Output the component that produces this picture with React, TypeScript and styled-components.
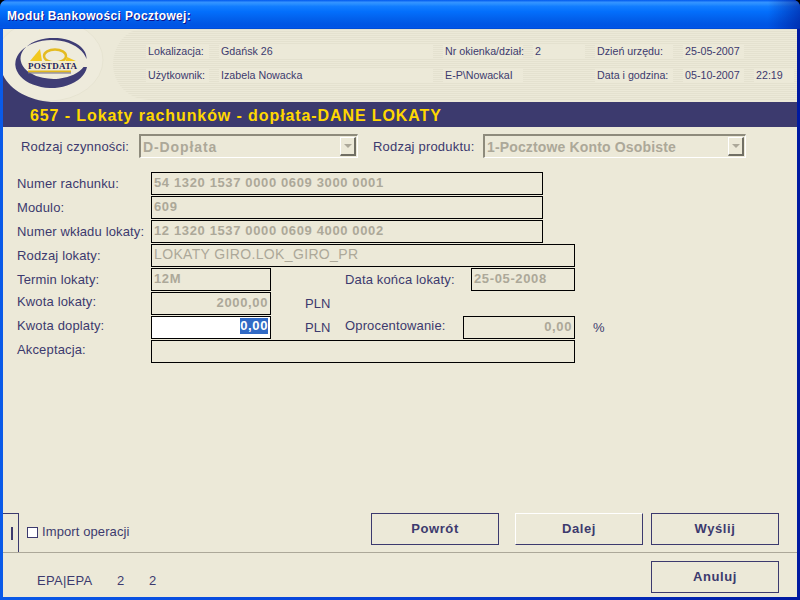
import React from "react";
import styled, { createGlobalStyle } from "styled-components";

const Global = createGlobalStyle`
  html, body { margin: 0; padding: 0; background: #000; }
  body { width: 800px; height: 600px; overflow: hidden; font-family: "Liberation Sans", Arial, sans-serif; }
`;

const Ink = "#3c3a6e";
const Paper = "#ece9d8";
const Muted = "#aca899";

const Window = styled.div`
  width: 800px;
  height: 600px;
  display: flex;
  flex-direction: column;
  border-radius: 7px 7px 0 0;
  overflow: hidden;
  background: linear-gradient(90deg, #0a5ae8 0%, #0840d8 50%, #0019a0 100%);
`;

const TitleBar = styled.div`
  height: 29px;
  flex: none;
  box-sizing: border-box;
  padding: 9px 0 0 7px;
  background:
    linear-gradient(90deg, rgba(0, 20, 140, 0) 96%, rgba(0, 20, 140, 0.55) 100%),
    linear-gradient(180deg, #0058ee 0%, #3593ff 8%, #288eff 14%, #127dff 22%, #036ffc 40%, #0262ee 62%, #0057e5 80%, #0054e3 90%, #0055eb 96%, #0046c8 100%);
  color: #fff;
  font-size: 12px;
  line-height: 14px;
  font-weight: bold;
  letter-spacing: 0.35px;
  text-shadow: 1px 1px 0 #0f1089;
`;

const Client = styled.div`
  flex: 1;
  margin: 0 3px 3px;
  background: ${Paper};
  color: ${Ink};
  display: flex;
  flex-direction: column;
`;

const Header = styled.div`
  height: 73px;
  flex: none;
  display: flex;
  background: ${Paper};
`;

const LogoSvg = styled.svg`
  width: 110px;
  height: 73px;
  flex: none;
  display: block;
`;

const InfoPanel = styled.div`
  flex: 1;
  height: 71px;
  box-sizing: border-box;
  padding: 15px 0 0 33px;
  border-radius: 30px 0 0 36px / 36px 0 0 36px;
  background: repeating-linear-gradient(180deg, #e4e1cf 0 1px, ${Paper} 1px 2px);
  display: grid;
  grid-template-columns: 63px 214px 80px 52px 78px 61px 40px;
  grid-auto-rows: 24px;
  column-gap: 10px;
  overflow: hidden;
`;

const InfoCell = styled.div`
  font-size: 10.7px;
  line-height: 14px;
  height: 14px;
  padding-left: 2px;
  background: ${Paper};
  white-space: nowrap;
`;

const Banner = styled.div`
  height: 25px;
  flex: none;
  box-sizing: border-box;
  padding: 1px 0 0 27px;
  background: ${Ink};
  color: #ffd700;
  font-size: 16px;
  font-weight: bold;
  line-height: 25px;
  letter-spacing: 0.9px;
  white-space: nowrap;
`;

const Form = styled.div`
  flex: 1;
  display: flex;
  flex-direction: column;
  padding-top: 7px;
`;

const ComboRow = styled.div`
  display: flex;
  align-items: center;
  height: 24px;
  padding-left: 18px;
  margin-bottom: 14px;
`;

const ComboLabel = styled.span<{ $w: number; $l?: number }>`
  width: ${(p) => p.$w}px;
  margin-left: ${(p) => p.$l ?? 0}px;
  font-size: 13px;
  letter-spacing: 0.2px;
  white-space: nowrap;
  flex: none;
`;

const Combo = styled.div<{ $w: number; $ls: number }>`
  width: ${(p) => p.$w}px;
  height: 24px;
  box-sizing: border-box;
  flex: none;
  display: flex;
  align-items: center;
  justify-content: space-between;
  border-style: solid;
  border-width: 2px 1px 1px 2px;
  border-color: #8e8b7c #fff #fff #8e8b7c;
  padding: 0 1px 0 2px;
  color: ${Muted};
  font-size: 14px;
  font-weight: bold;
  letter-spacing: ${(p) => p.$ls}px;
  white-space: nowrap;
`;

const ComboArrow = styled.div`
  width: 16px;
  height: 19px;
  box-sizing: border-box;
  border-style: solid;
  border-width: 1px 2px 2px 1px;
  border-color: #fff #716f64 #716f64 #fff;
  display: flex;
  align-items: center;
  justify-content: center;
  &::after {
    content: "";
    border-style: solid;
    border-width: 4px 4px 0;
    border-color: ${Muted} transparent transparent;
  }
`;

const Row = styled.div`
  display: flex;
  height: 24px;
  padding-left: 14px;
  flex: none;
`;

const FieldLabel = styled.div<{ $w?: number; $y?: number; $l?: number }>`
  width: ${(p) => p.$w ?? 134}px;
  margin-left: ${(p) => p.$l ?? 0}px;
  flex: none;
  font-size: 13px;
  letter-spacing: 0.15px;
  line-height: 16px;
  padding-top: ${(p) => p.$y ?? 4}px;
  white-space: nowrap;
`;

const Field = styled.div<{ $w: number; $active?: boolean; $right?: boolean; $plain?: boolean }>`
  width: ${(p) => p.$w}px;
  height: 23px;
  flex: none;
  box-sizing: border-box;
  border: 1px solid #000;
  background: ${(p) => (p.$active ? "#fff" : Paper)};
  color: ${Muted};
  font-size: ${(p) => (p.$plain ? 14 : 13)}px;
  font-weight: ${(p) => (p.$plain ? "normal" : "bold")};
  letter-spacing: ${(p) => (p.$plain ? "0.35px" : "0.63px")};
  line-height: ${(p) => (p.$plain ? 18 : 20)}px;
  padding: 0 2px;
  text-align: ${(p) => (p.$right ? "right" : "left")};
  white-space: nowrap;
  overflow: hidden;
`;

const Selected = styled.span`
  display: inline-block;
  background: #316ac5;
  color: #fff;
  height: 16px;
  line-height: 16px;
  margin-top: 1px;
  vertical-align: top;
`;

const Unit = styled.div<{ $w: number; $l: number }>`
  width: ${(p) => p.$w}px;
  margin-left: ${(p) => p.$l}px;
  flex: none;
  font-size: 13px;
  line-height: 16px;
  padding-top: 4px;
`;

const Spacer = styled.div`
  flex: 1;
`;

const ActionRow = styled.div`
  display: flex;
  align-items: flex-start;
  height: 39px;
  flex: none;
`;

const TabStub = styled.div`
  width: 16px;
  height: 39px;
  box-sizing: border-box;
  border-top: 1px solid ${Ink};
  border-right: 1px solid ${Ink};
  display: flex;
  align-items: center;
  justify-content: center;
  padding: 1px 0 0 3px;
  flex: none;
  &::after {
    content: "";
    width: 2px;
    height: 13px;
    background: ${Ink};
  }
`;

const ImportBox = styled.label`
  display: flex;
  align-items: center;
  margin: 12px 0 0 8px;
  font-size: 13px;
  letter-spacing: 0.1px;
  line-height: 14px;
  width: 344px;
  flex: none;
`;

const Check = styled.span`
  width: 11px;
  height: 11px;
  box-sizing: border-box;
  border: 1px solid ${Ink};
  background: #fff;
  margin-right: 4px;
  flex: none;
`;

const Btn = styled.div<{ $hi?: boolean; $l?: number }>`
  width: 128px;
  height: 32px;
  box-sizing: border-box;
  flex: none;
  margin-left: ${(p) => p.$l ?? 0}px;
  border-style: solid;
  border-width: 1px;
  border-color: ${(p) => (p.$hi ? `#fff ${Ink} ${Ink} #fff` : Ink)};
  display: flex;
  align-items: center;
  justify-content: center;
  padding-bottom: 2px;
  font-size: 13px;
  font-weight: bold;
  letter-spacing: 0.6px;
`;

const Buttons = styled.div`
  display: flex;
  gap: 8px;
`;

const Footer = styled.div`
  border-top: 1px solid ${Muted};
  height: 45px;
  flex: none;
  box-sizing: border-box;
  display: flex;
  align-items: flex-start;
  padding: 8px 18px 0 34px;
`;

const FooterText = styled.span<{ $w: number }>`
  width: ${(p) => p.$w}px;
  font-size: 13px;
  letter-spacing: 0.3px;
  line-height: 14px;
  padding-top: 13px;
  flex: none;
`;

export default function App() {
  return (
    <Window>
      <Global />
      <TitleBar>Moduł Bankowości Pocztowej:</TitleBar>
      <Client>
        <Header>
          <LogoSvg viewBox="0 0 110 73">
            <ellipse cx="46" cy="31" rx="54" ry="41" fill="#eeebdc" stroke="#e6e3d1" />
            <path d="M0 46 C8 62 26 71 48 73 L0 73 Z" fill="#3c3a6e" />
            <path d="M27 32 L37 20 L39 32 Z" fill="#f2c81e" />
            <ellipse cx="52" cy="27" rx="11" ry="6.5" fill="none" stroke="#e4bb22" strokeWidth="2.4" />
            <path d="M64 28 L75 33 L62 33 Z" fill="#f2c81e" />
            <path d="M83.5 30 A36 24 0 1 0 84 38 L80.5 38 A33 20.5 0 1 1 83.5 30 Z" fill="#3f3d75" />
            <rect x="25" y="32" width="50" height="8" fill="#f4eecb" />
            <text x="25" y="39.5" fontFamily="'Liberation Serif', serif" fontWeight="bold" fontSize="9" fill="#24235e" textLength="49">POSTDATA</text>
            <rect x="25" y="41.5" width="43" height="2" fill="#e2b91f" />
            <rect x="25" y="43.5" width="43" height="1" fill="#6f6d8e" />
          </LogoSvg>
          <InfoPanel>
            <InfoCell>Lokalizacja:</InfoCell>
            <InfoCell>Gdańsk 26</InfoCell>
            <InfoCell>Nr okienka/dział:</InfoCell>
            <InfoCell>2</InfoCell>
            <InfoCell>Dzień urzędu:</InfoCell>
            <InfoCell>25-05-2007</InfoCell>
            <div />
            <InfoCell>Użytkownik:</InfoCell>
            <InfoCell>Izabela Nowacka</InfoCell>
            <InfoCell>E-P\NowackaI</InfoCell>
            <div />
            <InfoCell>Data i godzina:</InfoCell>
            <InfoCell>05-10-2007</InfoCell>
            <InfoCell>22:19</InfoCell>
          </InfoPanel>
        </Header>
        <Banner>657 - Lokaty rachunków - dopłata-DANE LOKATY</Banner>
        <Form>
          <ComboRow>
            <ComboLabel $w={118}>Rodzaj czynności:</ComboLabel>
            <Combo $w={219} $ls={0.9}>D-Dopłata<ComboArrow /></Combo>
            <ComboLabel $w={110} $l={15}>Rodzaj produktu:</ComboLabel>
            <Combo $w={263} $ls={0.15}>1-Pocztowe Konto Osobiste<ComboArrow /></Combo>
          </ComboRow>
          <Row><FieldLabel>Numer rachunku:</FieldLabel><Field $w={392}>54 1320 1537 0000 0609 3000 0001</Field></Row>
          <Row><FieldLabel>Modulo:</FieldLabel><Field $w={392}>609</Field></Row>
          <Row><FieldLabel>Numer wkładu lokaty:</FieldLabel><Field $w={392}>12 1320 1537 0000 0609 4000 0002</Field></Row>
          <Row><FieldLabel>Rodzaj lokaty:</FieldLabel><Field $w={424} $plain>LOKATY GIRO.LOK_GIRO_PR</Field></Row>
          <Row>
            <FieldLabel>Termin lokaty:</FieldLabel>
            <Field $w={120}>12M</Field>
            <FieldLabel $w={126} $l={74}>Data końca lokaty:</FieldLabel>
            <Field $w={104}>25-05-2008</Field>
          </Row>
          <Row>
            <FieldLabel $y={2}>Kwota lokaty:</FieldLabel>
            <Field $w={120} $right>2000,00</Field>
            <Unit $w={40} $l={34}>PLN</Unit>
          </Row>
          <Row>
            <FieldLabel $y={2}>Kwota doplaty:</FieldLabel>
            <Field $w={120} $right $active><Selected>0,00</Selected></Field>
            <Unit $w={40} $l={34}>PLN</Unit>
            <FieldLabel $w={118} $y={2}>Oprocentowanie:</FieldLabel>
            <Field $w={112} $right>0,00</Field>
            <Unit $w={20} $l={18}>%</Unit>
          </Row>
          <Row>
            <FieldLabel $y={2}>Akceptacja:</FieldLabel>
            <Field $w={424} />
          </Row>
          <Spacer />
          <ActionRow>
            <TabStub />
            <ImportBox><Check />Import operacji</ImportBox>
            <Buttons>
              <Btn>Powrót</Btn>
              <Btn $hi $l={8}>Dalej</Btn>
              <Btn>Wyślij</Btn>
            </Buttons>
          </ActionRow>
          <Footer>
            <FooterText $w={80}>EPA|EPA</FooterText>
            <FooterText $w={32}>2</FooterText>
            <FooterText $w={502}>2</FooterText>
            <Btn>Anuluj</Btn>
          </Footer>
        </Form>
      </Client>
    </Window>
  );
}
